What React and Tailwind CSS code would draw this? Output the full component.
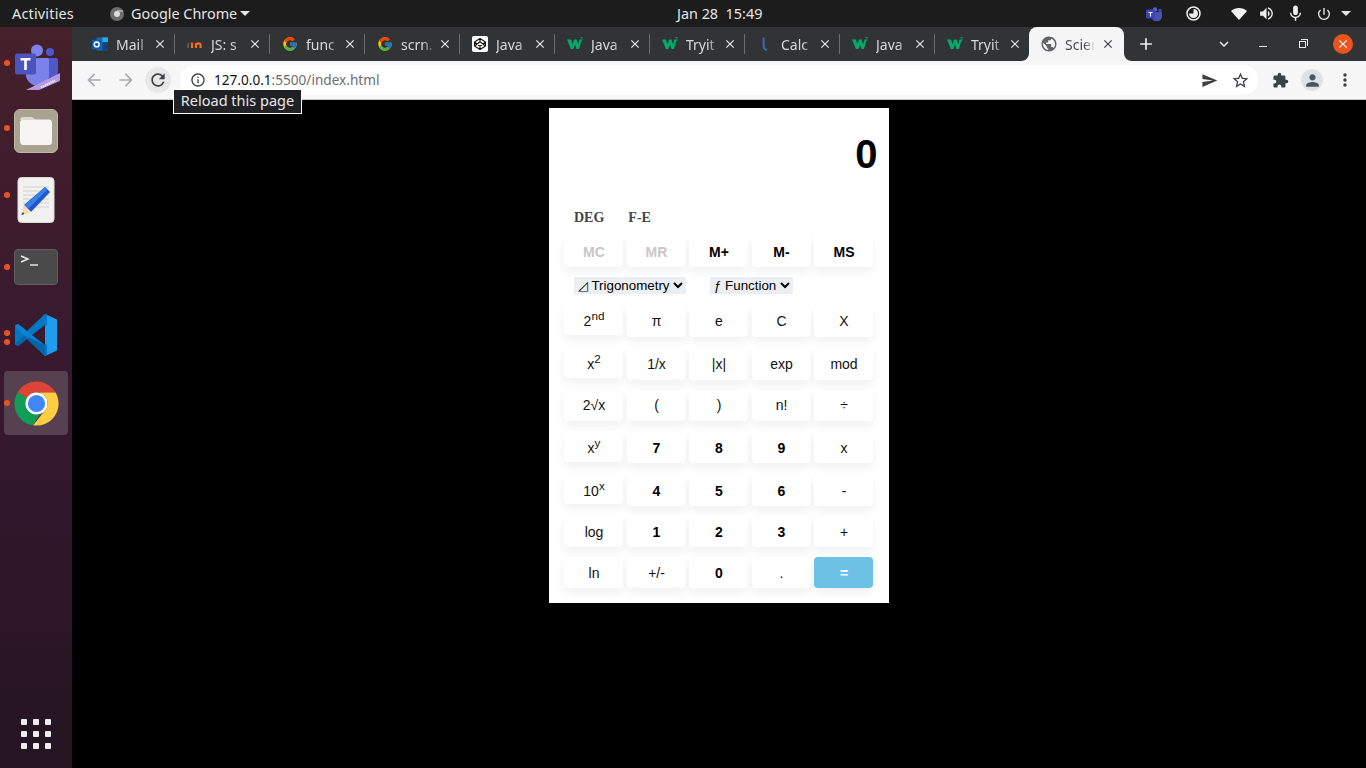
import React from "react";
import { MdArrowBack, MdArrowForward, MdRefresh, MdInfoOutline, MdStarBorder, MdSend, MdExtension, MdPerson, MdMoreVert, MdClose, MdAdd, MdExpandMore, MdPublic, MdMic, MdVolumeUp, MdPowerSettingsNew } from "react-icons/md";
import { FcGoogle } from "react-icons/fc";

const W3 = () => (
  <svg width="16" height="16" viewBox="0 0 16 16"><path d="M0 3.500h4l1.500 5 1.500-5h2.600l1.500 5 1.400-5h2.200L12 13H9.500L8 8.500 6.400 13H3.900z" fill="#04aa6d"/><path d="M13.300 1.500h2v.6l-.7.8c.6.1.8.5.8.9 0 .6-.5 1-1.100 1-.3 0-.7-.1-.9-.3" fill="none" stroke="#04aa6d" strokeWidth=".7"/></svg>
);
const Outlook = () => (
  <svg width="17" height="16" viewBox="0 0 17 16"><rect x="5" y="1" width="12" height="14" rx="1" fill="#0f6cbd"/><rect x="11" y="1" width="6" height="5" fill="#28a8ea"/><rect x="5" y="6" width="6" height="5" fill="#0f78d4"/><rect x="11" y="6" width="6" height="9" fill="#14447d"/><rect x="0" y="3.500" width="10" height="10" rx="1" fill="#0a5cad"/><circle cx="5" cy="8.500" r="2.600" fill="none" stroke="#fff" strokeWidth="1.500"/></svg>
);
const Mn = () => (
  <svg width="16" height="16" viewBox="0 0 16 16"><path d="M1 12V8.500c0-.8.500-1.200 1-1.200" stroke="#7a5a46" strokeWidth="1.600" fill="none"/><path d="M5 12V6.500" stroke="#f06d22" strokeWidth="2.200"/><path d="M9 12V7M9 8.500c.7-1.200 4.600-2 4.600 1V12" stroke="#f06d22" strokeWidth="2.200" fill="none"/></svg>
);
const Codepen = () => (
  <svg width="16" height="16" viewBox="0 0 16 16"><rect width="16" height="16" rx="2" fill="#fff"/><path d="M8 2.500 13.500 6v4L8 13.500 2.500 10V6zM8 2.500v3.300M8 10.200v3.300M2.500 6 8 10.200 13.500 6M2.500 10 8 5.800l5.500 4.200" fill="none" stroke="#111" strokeWidth="1.100"/></svg>
);
const Blue = () => (
  <svg width="16" height="16" viewBox="0 0 16 16"><path d="M6.500 1.500c.3 4-.2 8 .5 10.500.3 1.200 1.500 1.800 3 2" fill="none" stroke="#2f6fb5" strokeWidth="2" /></svg>
);

const tabs = [
  ["Mail", <Outlook />],
  ["JS: s", <Mn />],
  ["func", <FcGoogle size={16} />],
  ["scrn.", <FcGoogle size={16} />],
  ["Java", <Codepen />],
  ["Java", <W3 />],
  ["Tryit", <W3 />],
  ["Calc", <Blue />],
  ["Java", <W3 />],
  ["Tryit", <W3 />],
];

function Tab({ title, icon, last }) {
  return (
    <div className="w-[95px] h-[34px] shrink-0 flex items-center pl-[12px] relative">
      <span className="w-[16px] h-[16px] shrink-0 flex items-center justify-center">{icon}</span>
      <span className="ml-[8px] w-[34px] overflow-hidden whitespace-nowrap text-[14px] text-[#d8d9da] [mask-image:linear-gradient(90deg,#000_65%,transparent)]">{title}</span>
      <MdClose className="absolute left-[73px] top-[10px] text-[#e8eaed]" size={14} />
      {!last && <span className="absolute right-0 top-[7px] h-[20px] w-px bg-[#6b6c6e]" />}
    </div>
  );
}

function TeamsBig() {
  return (
    <svg width="46" height="46" viewBox="0 0 46 46">
      <circle cx="23" cy="6.500" r="6" fill="#7b83eb" />
      <circle cx="36" cy="8" r="4" fill="#5059c9" />
      <path d="M30 14h12c1 0 2 1 2 2v11c0 5-4 8-8 8h-6z" fill="#5059c9" />
      <path d="M12 14h21c1 0 2 1 2 2v15c0 6-5 11-11 11S12 37 12 31z" fill="#7b83eb" />
      <rect x="1" y="9.500" width="21" height="21" rx="2" fill="#4b53bc" />
      <path d="M6.500 14h10v2.400h-3.700V26h-2.600v-9.600H6.500z" fill="#fff" />
      <path d="M12 46 46 29v7c0 .6-.3 1-.8 1.300L25 46z" fill="#b49ae6" />
      <path d="M27 43.500 41 36.500" stroke="#efe8fb" strokeWidth="2.200" strokeDasharray="1.500 .6" />
    </svg>
  );
}
function Files() {
  return (
    <div className="w-[44px] h-[44px] rounded-[6px] bg-[#a8a290] border border-[#bdb8a8] flex items-center justify-center">
      <svg width="32" height="28" viewBox="0 0 32 28"><path d="M0 3c0-1.500 1-3 3-3h9l4 3h-16z" fill="#dcd9d0"/><path d="M0 5c0-1 1-2 2-2h12l2-.5h13c1.500 0 3 1 3 3V25c0 1.500-1 3-3 3H3c-1.500 0-3-1.500-3-3z" fill="#f6f5f3"/></svg>
    </div>
  );
}
function Editor() {
  return (
    <svg width="38" height="46" viewBox="0 0 38 46">
      <rect x="1" y="0.500" width="36" height="45" rx="3.500" fill="#f1f1f0" stroke="#dddddd" />
      <g stroke="#d0d0d0" strokeWidth="1"><path d="M6 10h26M6 14h26M6 18h26M6 22h26M6 26h26M6 30h26" /></g>
      <path d="M28 10 33 15 14 35 7 28z" fill="#1f55cf" />
      <path d="M28 10l2.500 2.500L11 32 7.500 28.500z" fill="#3b80e6" />
      <path d="M7 28l7 7-9.500 3z" fill="#f4d9b8" />
      <path d="M6 35l-1.700 3.200 3-1.200z" fill="#333" />
    </svg>
  );
}
function Terminal() {
  return (
    <div className="w-[44px] h-[36px] rounded-[4px] bg-[#4a4a4a] border border-[#5e5e5e] relative">
      <svg width="26" height="16" viewBox="0 0 26 16" className="absolute left-[5px] top-[4px]"><path d="M1 2l7 3-7 3" fill="none" stroke="#eee" strokeWidth="1.400"/><path d="M10 11h8" stroke="#eee" strokeWidth="1.400"/></svg>
    </div>
  );
}
function VSCode() {
  return (
    <svg width="44" height="42" viewBox="0 0 44 42">
      <path d="M31 0 43 5.500v31L31 42l-2-2V2z" fill="#1f9cf0" />
      <path d="M31 0 13 17 4 10 1 11.500v19L4 32l9-7 18 17 2-1V31l-14-10L33 11V1z" fill="#0078c6" />
      <path d="M1 11.500 4 10l27 21v11l-18-17-9 7-3-1.500L9 21z" fill="#0065a9" />
      <path d="M1 11.500 4 10 31 31v0L9 21z" fill="#0a83d4" />
      <path d="M31 11 31 31 18 21z" fill="#3a1a30" />
    </svg>
  );
}
function ChromeLogo({ size = 53 }) {
  return (
    <svg width={size} height={size} viewBox="0 0 48 48">
      <path d="M24 24 6.700 14A20 20 0 0 1 41.300 14H24z" fill="#db4437" />
      <path d="M4 24a20 20 0 0 0 17 19.800l5-8.800L24 24 6.700 14A20 20 0 0 0 4 24z" fill="#0f9d58" />
      <path d="M24 14h17.300A20 20 0 0 1 21 43.800L32.700 29A10 10 0 0 0 24 14z" fill="#ffcd40" />
      <circle cx="24" cy="24" r="10" fill="#fff" />
      <circle cx="24" cy="24" r="7.800" fill="#4285f4" />
    </svg>
  );
}
const Dot = ({ top }) => <span className={`absolute left-[4px] w-[6px] h-[6px] rounded-full bg-[#e95420] ${top}`} />;

function Dock() {
  return (
    <div className="w-[72px] shrink-0 relative flex flex-col items-center bg-gradient-to-b from-[#46202b] via-[#36182f] to-[#251421]">
      <Dot top="top-[33px]" />
      <Dot top="top-[98px]" />
      <Dot top="top-[165px]" />
      <Dot top="top-[237px]" />
      <Dot top="top-[303px]" />
      <Dot top="top-[312px]" />
      <Dot top="top-[373px]" />
      <div className="mt-[17px] ml-[2px] h-[46px]"><TeamsBig /></div>
      <div className="mt-[19px]"><Files /></div>
      <div className="mt-[24px]"><Editor /></div>
      <div className="mt-[26px]"><Terminal /></div>
      <div className="mt-[29px]"><VSCode /></div>
      <div className="mt-[15px] w-[64px] h-[64px] rounded-[4px] bg-[#57404f] flex items-center justify-center"><ChromeLogo /></div>
      <div className="mt-auto mb-[19px] grid grid-cols-3 gap-[6px]">
        {Array.from({ length: 9 }).map((_, i) => <span key={i} className="w-[6px] h-[6px] rounded-[1px] bg-[#eeeeee]" />)}
      </div>
    </div>
  );
}

function TopBar() {
  return (
    <div className="h-[27px] shrink-0 bg-[#1c1c1c] flex items-center text-[14.4px] text-[#e5e5e5] font-['Noto_Sans',sans-serif]">
      <span className="ml-[12px] w-[98px] tracking-[0.2px]">Activities</span>
      <svg width="14" height="14" viewBox="0 0 14 14" className="shrink-0"><circle cx="7" cy="7" r="7" fill="#6d6d6d"/><circle cx="7" cy="7" r="3" fill="#ddd"/><path d="M7 4h6" stroke="#ddd" strokeWidth="1"/></svg>
      <span className="ml-[7px] w-[104px] whitespace-nowrap">Google Chrome</span>
      <span className="ml-[5px] w-0 h-0 border-x-[5px] border-x-transparent border-t-[5px] border-t-[#e5e5e5]" />
      <span className="ml-[427px] whitespace-nowrap w-[85px]">Jan 28&nbsp;&nbsp;15:49</span>
      <svg width="16" height="14" viewBox="0 0 16 14" className="ml-[384px] shrink-0"><circle cx="9" cy="2.500" r="2.200" fill="#5c62c9"/><circle cx="14" cy="3.500" r="1.700" fill="#4a50b0"/><path d="M6 5h10v5c0 2-2 4-4 4H9c-2 0-3-2-3-4z" fill="#4a50b0"/><rect x="0" y="2.500" width="9" height="9" rx="1" fill="#3d44b8"/><path d="M2.500 5h4v1H5v3.500H4V6H2.500z" fill="#fff"/></svg>
      <svg width="15" height="15" viewBox="0 0 15 15" className="ml-[24px] shrink-0"><circle cx="7.500" cy="7.500" r="6.500" fill="#1c1c1c" stroke="#eee" strokeWidth="1.500"/><path d="M7.500 3a4.500 4.500 0 1 1-4.500 4.500h4.500z" fill="#eee"/></svg>
      <svg width="16" height="12" viewBox="0 0 16 12" className="ml-[30px] shrink-0"><path d="M0 3C4-1 12-1 16 3L8 12z" fill="#f2f2f2"/></svg>
      <MdVolumeUp size={17} className="ml-[11px] shrink-0 text-[#eeeeee]" />
      <MdMic size={19} className="ml-[11px] shrink-0 text-[#eeeeee]" />
      <MdPowerSettingsNew size={16} className="ml-[11px] shrink-0 text-[#eeeeee]" />
      <span className="ml-[9px] w-0 h-0 border-x-[5px] border-x-transparent border-t-[5px] border-t-[#e5e5e5]" />
    </div>
  );
}

function Corner({ side }) {
  const cls = side === "l" ? "-left-[8px]" : "-right-[8px] -scale-x-100";
  return (
    <svg width="8" height="8" viewBox="0 0 8 8" className={`absolute bottom-0 ${cls}`}><path d="M8 0v8H0c4.500 0 8-3.500 8-8z" fill="#f5f5f5" /></svg>
  );
}

function TabStrip() {
  return (
    <div className="h-[34px] shrink-0 bg-[#323335] flex items-center pl-[8px] font-['Noto_Sans',sans-serif]">
      {tabs.map((t, i) => <Tab key={i} title={t[0]} icon={t[1]} last={i === 9} />)}
      <div className="w-[95px] h-[34px] shrink-0 -ml-[1px] bg-[#f5f5f5] rounded-t-[8px] flex items-center pl-[12px] relative">
        <Corner side="l" />
        <Corner side="r" />
        <MdPublic size={18} className="text-[#5f6368] -ml-[1px] shrink-0" />
        <span className="ml-[7px] w-[30px] overflow-hidden whitespace-nowrap text-[14px] text-[#4a4c50] [mask-image:linear-gradient(90deg,#000_65%,transparent)]">Scien</span>
        <MdClose className="absolute left-[72px] top-[10px] text-[#3c4043]" size={14} />
      </div>
      <MdAdd size={20} className="ml-[12px] text-[#f1f1f1] shrink-0" />
      <MdExpandMore size={18} className="ml-[59px] text-[#e8eaed] shrink-0" />
      <span className="ml-[26px] w-[8px] h-px bg-[#e8eaed] mt-[5px]" />
      <span className="ml-[32px] w-[7px] h-[7px] border border-[#e8eaed] relative">
        <span className="absolute -top-[3px] left-[1px] w-[7px] h-[7px] border-t border-r border-[#e8eaed]" />
      </span>
      <span className="ml-[27px] w-[20px] h-[20px] rounded-full bg-[#e95420] flex items-center justify-center"><MdClose size={14} className="text-white" /></span>
    </div>
  );
}

function Toolbar() {
  return (
    <div className="h-[39px] shrink-0 bg-[#f7f7f7] border-b border-[#c9c9c9] flex items-center relative font-['Noto_Sans',sans-serif]">
      <MdArrowBack size={20} className="ml-[12px] text-[#a8abaf] shrink-0" />
      <MdArrowForward size={20} className="ml-[12px] text-[#a8abaf] shrink-0" />
      <span className="w-[26px] h-[26px] ml-[9px] rounded-full bg-[#e8e8e8] flex items-center justify-center shrink-0"><MdRefresh size={20} className="text-[#3c4043]" /></span>
      <div className="ml-[9px] w-[1078px] h-[30px] rounded-full bg-white flex items-center shrink-0">
        <MdInfoOutline size={16} className="ml-[10px] text-[#3c4043]" />
        <span className="ml-[8px] text-[13.6px] text-[#111111] whitespace-nowrap">127.0.0.1<span className="text-[#6b6e73]">:5500/index.html</span></span>
        <MdSend size={17} className="ml-auto text-[#3c4043]" />
        <MdStarBorder size={19} className="ml-[13px] mr-[8px] text-[#3c4043]" />
      </div>
      <MdExtension size={17} className="ml-[14px] text-[#3c4043] shrink-0" />
      <span className="ml-[12px] w-[22px] h-[22px] rounded-full bg-[#dfe1e5] flex items-center justify-center shrink-0"><MdPerson size={19} className="text-[#4c5663]" /></span>
      <MdMoreVert size={20} className="ml-[12px] text-[#3c4043] shrink-0" />
      <div className="absolute left-[101px] top-[28px] w-[129px] h-[25px] bg-[#202124] border border-white pb-[2px] flex items-center justify-center text-[14.500px] text-[#e8e8e8] whitespace-nowrap z-10">Reload this page</div>
    </div>
  );
}

function Btn({ children, kind = "", up = "" }) {
  const tone = {
    "": "bg-white text-[#111111]",
    bold: "bg-white text-black font-bold",
    dim: "bg-white text-[#c9c6c8] font-bold",
    eq: "bg-[#6cc1e4] text-white font-bold",
  }[kind];
  return (
    <div className={`w-[59px] h-[31px] shrink-0 rounded-[4px] pl-[1px] flex items-center justify-center text-[14px] shadow-[0_5px_10px_rgba(0,0,0,0.06)] ${tone} ${up}`}>{children}</div>
  );
}
const Sup = ({ a, b }) => <span>{a}<sup className="text-[11.67px]">{b}</sup></span>;

function Row({ items, first, firstClass = "", rest = "" }) {
  return (
    <div className="flex gap-[3.5px] items-start">
      <Btn up={firstClass}>{first}</Btn>
      {items.map((it, i) => <Btn key={i} kind={it[1] || ""} up={rest}>{it[0]}</Btn>)}
    </div>
  );
}

function Calculator() {
  return (
    <div className="mx-auto mt-[8px] w-[340px] h-[495px] bg-white pl-[15px] flex flex-col font-['Liberation_Sans',sans-serif]">
      <div className="mt-[23px] h-[46px] pr-[26.5px] -mr-[15px] ml-auto text-[40px] leading-[46px] font-bold text-black text-right">0</div>
      <div className="mt-[33px] h-[16px] ml-[10px] flex gap-[24px] text-[14px] leading-[16px] font-bold text-[#444444] font-['Liberation_Serif',serif]">
        <span>DEG</span><span>F-E</span>
      </div>
      <div className="mt-[10px] flex flex-col gap-[10px]">
        <div className="flex gap-[3.5px]">
          <Btn kind="dim" up="pt-[2px]">MC</Btn><Btn kind="dim" up="pt-[2px]">MR</Btn><Btn kind="bold" up="pt-[2px]">M+</Btn><Btn kind="bold" up="pt-[2px]">M-</Btn><Btn kind="bold" up="pt-[2px]">MS</Btn>
        </div>
        <div className="h-[17px] ml-[10px] flex gap-[24px]">
          <select className="h-[17px] w-[112px] bg-[#eceff1] text-[13.33px] text-black outline-none font-['Liberation_Sans',sans-serif]"><option>◿ Trigonometry</option></select>
          <select className="h-[17px] w-[83px] bg-[#eceff1] text-[13.33px] text-black outline-none font-['Liberation_Sans',sans-serif]"><option>ƒ Function</option></select>
        </div>
        <Row first={<Sup a="2" b="nd" />} firstClass="pt-[4px]" rest="mt-[2px]" items={[["π"], ["e"], ["C"], ["X"]]} />
        <Row first={<Sup a="x" b="2" />} firstClass="pt-[4px]" rest="mt-[2px]" items={[["1/x"], ["|x|"], ["exp"], ["mod"]]} />
        <Row first="2√x" items={[["("], [")"], ["n!"], ["÷"]]} />
        <Row first={<Sup a="x" b="y" />} firstClass="pt-[4px]" rest="mt-[1px] pt-[2px]" items={[["7", "bold"], ["8", "bold"], ["9", "bold"], ["x"]]} />
        <Row first={<Sup a="10" b="x" />} firstClass="pt-[6px]" rest="mt-[2px] pt-[2px]" items={[["4", "bold"], ["5", "bold"], ["6", "bold"], ["-"]]} />
        <Row first={<span className="mt-[2px]">log</span>} rest="pt-[2px]" items={[["1", "bold"], ["2", "bold"], ["3", "bold"], ["+"]]} />
        <div className="flex gap-[3.5px]">
          <Btn up="pt-[2px]">ln</Btn><Btn up="pt-[2px]">+/-</Btn><Btn kind="bold" up="pt-[2px]">0</Btn><Btn up="pt-[2px]">.</Btn><Btn kind="eq" up="pt-[2px]">=</Btn>
        </div>
      </div>
    </div>
  );
}

export default function App() {
  return (
    <div className="w-[1366px] h-[768px] flex flex-col overflow-hidden bg-black">
      <TopBar />
      <div className="flex-1 flex min-h-0">
        <Dock />
        <div className="flex-1 flex flex-col min-w-0">
          <TabStrip />
          <Toolbar />
          <div className="flex-1 bg-black"><Calculator /></div>
        </div>
      </div>
    </div>
  );
}
